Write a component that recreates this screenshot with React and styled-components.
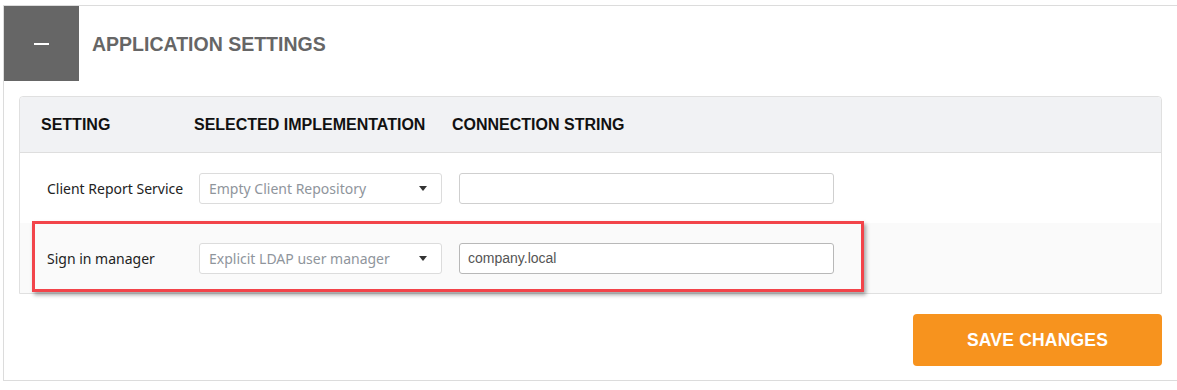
import React from 'react';
import styled, { createGlobalStyle } from 'styled-components';

const GlobalStyle = createGlobalStyle`
  body {
    margin: 0;
    background: #fff;
    font-family: "Liberation Sans", Arial, sans-serif;
  }
`;

const Panel = styled.section`
  margin: 5px 0 0 3px;
  border-top: 1px solid #dcdcdc;
  border-left: 1px solid #dcdcdc;
  border-bottom: 1px solid #dcdcdc;
  padding-bottom: 14px;
`;

const PanelHeader = styled.div`
  display: flex;
  align-items: center;
  height: 75px;
`;

const Toggle = styled.button`
  width: 75px;
  height: 75px;
  border: 0;
  padding: 0;
  background: #666;
  display: flex;
  align-items: center;
  justify-content: center;

  &::before {
    content: '';
    width: 15px;
    height: 2px;
    background: #fff;
  }
`;

const Title = styled.h2`
  margin: 2px 0 0 13px;
  font-size: 19.5px;
  font-weight: bold;
  color: #666;
`;

const Body = styled.div`
  padding: 15px 15px 0 15px;
`;

const Table = styled.div`
  position: relative;
  border: 1px solid #e0e0e0;
  border-radius: 4px 4px 0 0;
`;

const HeadRow = styled.div`
  display: flex;
  align-items: center;
  height: 55px;
  padding-left: 21px;
  background: #f1f2f4;
  border-bottom: 1px solid #dedede;
  border-radius: 4px 4px 0 0;
`;

const HeadCell = styled.div`
  width: ${p => p.$w ? `${p.$w}px` : 'auto'};
  font-size: 16px;
  font-weight: bold;
  color: #111;
`;

const Row = styled.div`
  display: flex;
  align-items: center;
  height: 70px;
  padding-left: 27px;
  background: ${p => p.$alt ? '#fafafa' : '#fff'};
`;

const Label = styled.div`
  width: 152px;
  font-family: "Noto Sans", "Open Sans", sans-serif;
  font-size: 14px;
  color: #222;
`;

const Select = styled.div`
  box-sizing: border-box;
  width: 243px;
  height: 31px;
  margin-right: 17px;
  padding: 0 14px 0 9px;
  border: 1px solid #dcdcdc;
  border-radius: 3px;
  background: #fff;
  display: flex;
  align-items: center;
  justify-content: space-between;
  font-family: "Noto Sans", "Open Sans", sans-serif;
  font-size: 14px;
  color: #8f959c;

  &::after {
    content: '';
    border-left: 4px solid transparent;
    border-right: 4px solid transparent;
    border-top: 5px solid #333;
  }
`;

const Input = styled.input`
  box-sizing: border-box;
  width: 375px;
  height: 31px;
  padding: 0 8px;
  border: 1px solid ${p => p.value ? '#b8b8b8' : '#cfcfcf'};
  border-radius: 3px;
  background: #fff;
  font-family: "Liberation Sans", Arial, sans-serif;
  font-size: 14px;
  color: #555;
  outline: none;
`;

const Highlight = styled.div`
  position: absolute;
  left: 12px;
  top: 124px;
  width: 832px;
  height: 71px;
  box-sizing: border-box;
  border: 3px solid #f2444a;
  box-shadow: 2px 3px 4px rgba(0, 0, 0, 0.35);
  pointer-events: none;
`;

const Footer = styled.div`
  display: flex;
  justify-content: flex-end;
  padding-top: 20px;
`;

const SaveButton = styled.button`
  width: 249px;
  height: 52px;
  border: 0;
  border-radius: 4px;
  background: #f7931e;
  color: #fff;
  font-family: "Liberation Sans", Arial, sans-serif;
  font-size: 17.5px;
  font-weight: bold;
  letter-spacing: 0.2px;
`;

const rows = [
  { label: 'Client Report Service', impl: 'Empty Client Repository', conn: '' },
  { label: 'Sign in manager', impl: 'Explicit LDAP user manager', conn: 'company.local' },
];

export default function App() {
  return (
    <>
      <GlobalStyle />
      <Panel>
        <PanelHeader>
          <Toggle aria-label="collapse" />
          <Title>APPLICATION SETTINGS</Title>
        </PanelHeader>
        <Body>
          <Table>
            <HeadRow>
              <HeadCell $w={153}>SETTING</HeadCell>
              <HeadCell $w={258}>SELECTED IMPLEMENTATION</HeadCell>
              <HeadCell>CONNECTION STRING</HeadCell>
            </HeadRow>
            {rows.map((r, i) => (
              <Row key={r.label} $alt={i % 2 === 1}>
                <Label>{r.label}</Label>
                <Select>{r.impl}</Select>
                <Input value={r.conn} readOnly />
              </Row>
            ))}
            <Highlight />
          </Table>
          <Footer>
            <SaveButton>SAVE CHANGES</SaveButton>
          </Footer>
        </Body>
      </Panel>
    </>
  );
}
